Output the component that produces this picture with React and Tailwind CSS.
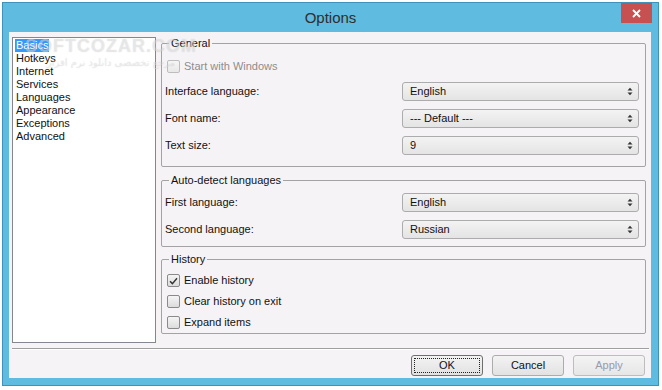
import {useState} from "react";

const font = {fontFamily: '"Liberation Sans", Arial, sans-serif'};

function Arrows() {
    return (
        <svg width="6" height="9" viewBox="0 0 6 9" className="text-[#333]">
            <path d="M0.5 3.5 L3 0.8 L5.5 3.5 Z" fill="currentColor"/>
            <path d="M0.5 5.5 L3 8.2 L5.5 5.5 Z" fill="currentColor"/>
        </svg>
    );
}

function Combo({value}) {
    return (
        <div className="flex items-center justify-between w-[237px] h-[19px] border border-[#acacac] rounded-[3px] bg-linear-to-b from-[#f3f3f3] to-[#e4e4e4] pl-[7px] pr-[5px]">
            <span className="text-[11px] text-[#111] leading-none">{value}</span>
            <Arrows/>
        </div>
    );
}

function Check({checked, disabled, label}) {
    return (
        <div className="flex items-center h-[21px] pl-[2px]">
            <span
                className={"flex items-center justify-center w-[13px] h-[13px] rounded-[2px] border " + (disabled ? "border-[#bdbdbd] bg-linear-to-b from-[#f6f6f6] to-[#e8e8e8]" : "border-[#8a8a8a] bg-linear-to-b from-[#f5f5f5] to-[#dcdcdc]")}>
                {checked &&
                    <svg width="9" height="8" viewBox="0 0 9 8">
                        <path d="M1 4.2 L3.4 6.6 L8 1.2" stroke="#333" strokeWidth="1.4" fill="none"/>
                    </svg>}
            </span>
            <span className={"ml-[4px] text-[11px] " + (disabled ? "text-[#8d8d8d]" : "text-[#111]")}>{label}</span>
        </div>
    );
}

function Row({label, value}) {
    return (
        <div className="flex items-center h-[27px]">
            <span className="w-[237px] text-[11px] text-[#111]">{label}</span>
            <Combo value={value}/>
        </div>
    );
}

function Group({title, className, children}) {
    return (
        <fieldset className={"border border-[#a3a3a3] rounded-[2px] px-[3px] " + className}>
            <legend className="ml-[4px] px-[2px] text-[11px] leading-[15px] text-[#111]">{title}</legend>
            {children}
        </fieldset>
    );
}

const pages = ["Basics", "Hotkeys", "Internet", "Services", "Languages", "Appearance", "Exceptions", "Advanced"];

export default function App() {
    const [page, setPage] = useState("Basics");
    return (
        <div className="w-[662px] h-[390px] bg-white pt-[2px] pl-[2px] overflow-hidden" style={font}>
            <div className="relative w-[657px] h-[384px] border border-[#3f93bb] bg-[#5fbbdf] flex flex-col">
                <div className="grid grid-cols-[1fr_auto_1fr] h-[29px]">
                    <div/>
                    <div className="text-[15px] leading-[29px] text-[#2e2e2e]">Options</div>
                    <div
                        className="justify-self-end mr-[6px] w-[31px] h-[20px] bg-[#c75050] flex items-center justify-center">
                        <svg width="9" height="9" viewBox="0 0 9 9">
                            <path d="M1 1 L8 8 M8 1 L1 8" stroke="white" strokeWidth="1.8"/>
                        </svg>
                    </div>
                </div>

                <div className="ml-[6px] w-[642px] h-[346px] bg-[#f6f3f6] flex flex-col">
                    <div className="flex mt-[4px] ml-[3px] h-[307px]">
                        <div className="mt-[1px] w-[144px] h-[306px] border border-[#828790] bg-white pt-[1px] pl-[2px] flex flex-col">
                            {pages.map((p) => (
                                <div key={p} className="h-[13px] flex items-center" onClick={() => setPage(p)}>
                                    <span
                                        className={"px-[1px] text-[11px] leading-[13px] " + (page === p ? "bg-[#3399ff] text-white" : "text-[#111]")}>{p}</span>
                                </div>
                            ))}
                        </div>

                        <div className="ml-[5px] w-[485px] flex flex-col">
                            <Group title="General" className="pt-[5px] pb-[7px]">
                                <div className="flex flex-col h-[20px] justify-center">
                                    <Check disabled label="Start with Windows"/>
                                </div>
                                <div className="mt-[2px]">
                                    <Row label="Interface language:" value="English"/>
                                    <Row label="Font name:" value="--- Default ---"/>
                                    <Row label="Text size:" value="9"/>
                                </div>
                            </Group>

                            <Group title="Auto-detect languages" className="mt-[6px] pt-[1px] pb-[3px]">
                                <Row label="First language:" value="English"/>
                                <Row label="Second language:" value="Russian"/>
                            </Group>

                            <Group title="History" className="mt-[5px] pt-[3px]">
                                <Check checked label="Enable history"/>
                                <Check label="Clear history on exit"/>
                                <Check label="Expand items"/>
                            </Group>
                        </div>
                    </div>

                    <div className="mt-[5px] ml-[3px] w-[637px] border-t border-[#a0a0a0] border-b border-b-white"/>

                    <div className="mt-[5px] flex justify-end gap-[9px] pr-[6px]">
                        <button
                            className="relative w-[72px] h-[21px] border border-[#6f6f6f] rounded-[3px] bg-linear-to-b from-[#f3f3f3] to-[#e2e2e2] text-[11px] text-[#111]">
                            <span className="absolute inset-[2px] border border-dotted border-[#222]"/>
                            OK
                        </button>
                        <button
                            className="w-[72px] h-[21px] border border-[#acacac] rounded-[3px] bg-linear-to-b from-[#f3f3f3] to-[#e2e2e2] text-[11px] text-[#111]">
                            Cancel
                        </button>
                        <button
                            className="w-[72px] h-[21px] border border-[#bdbdbd] rounded-[3px] bg-linear-to-b from-[#f4f4f4] to-[#e6e6e6] text-[11px] text-[#9a9aab]">
                            Apply
                        </button>
                    </div>
                </div>

                <div className="absolute left-[22px] top-[34px] pointer-events-none flex flex-col items-center">
                    <span className="text-[18px] font-bold tracking-[1px] leading-[19px] text-white/45 [text-shadow:0_0_1px_rgba(0,0,0,0.18)]">SOFTCOZAR.COM</span>
                    <span className="text-[10px] leading-[13px] text-white/45 [text-shadow:0_0_1px_rgba(0,0,0,0.18)]" style={{fontFamily: '"DejaVu Sans", sans-serif'}} dir="rtl">مرجع تخصصی دانلود نرم افزار</span>
                </div>
            </div>
        </div>
    );
}
